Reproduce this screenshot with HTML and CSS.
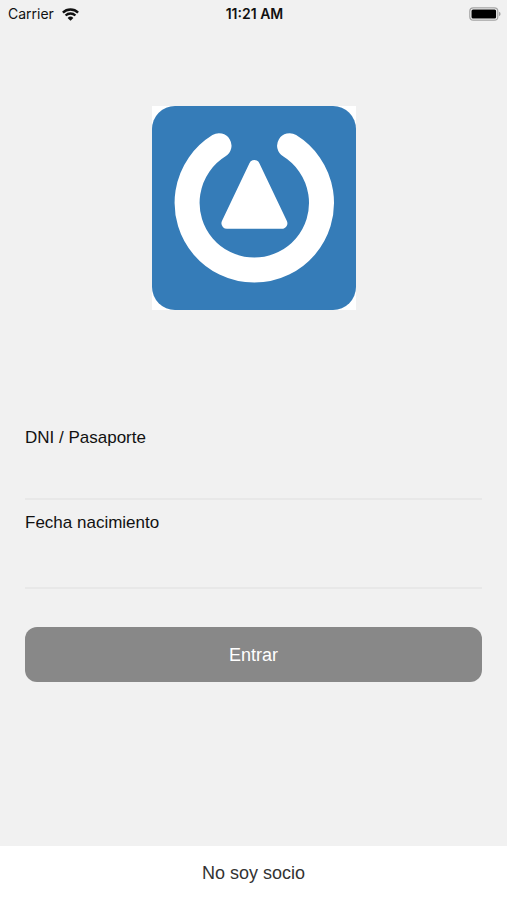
FILE: index.html
```html
<!DOCTYPE html>
<html lang="es">
<head>
<meta charset="utf-8">
<meta name="viewport" content="width=device-width, initial-scale=1">
<title>Entrar</title>
<link rel="stylesheet" href="styles.css">
</head>
<body>
<header class="status">
  <div class="status-left">
    <span>Carrier</span>
    <svg class="wifi" viewBox="0 0 17 13" aria-hidden="true">
      <path d="M.9 4.6a10.9 10.9 0 0 1 15.2 0M3.6 7.5a7 7 0 0 1 9.8 0" fill="none" stroke="#111" stroke-width="2.4"/>
      <path d="M8.5 12.8 5.6 9.9a4.1 4.1 0 0 1 5.8 0z" fill="#111"/>
    </svg>
  </div>
  <span class="time">11:21 AM</span>
  <div class="status-right">
    <svg class="battery" viewBox="0 0 32 14" aria-hidden="true">
      <rect x=".8" y=".8" width="28" height="12.4" rx="3.5" fill="#f8f8f8" stroke="#a3a3a3" stroke-width="1.2"/>
      <rect x="2.5" y="2.5" width="24.6" height="9" rx="1.5" fill="#000"/>
      <path d="M30 4.8q1.6.6 1.6 2.2t-1.6 2.2z" fill="#a3a3a3"/>
    </svg>
  </div>
</header>
<main class="content">
  <svg class="logo" viewBox="0 0 204 204" role="img" aria-label="Logo">
    <rect width="204" height="204" rx="23" fill="#357cb8"/>
    <path d="M67 39.7A67.2 67.2 0 1 0 137.6 39.7" fill="none" stroke="#fff" stroke-width="25" stroke-linecap="round"/>
    <path d="M102.4 59.5 129.9 117.3H74.9z" fill="#fff" stroke="#fff" stroke-width="11" stroke-linejoin="round"/>
  </svg>
  <form class="form">
    <div class="field">
      <label for="dni">DNI / Pasaporte</label>
      <input id="dni" type="text">
    </div>
    <div class="field">
      <label for="fecha">Fecha nacimiento</label>
      <input id="fecha" type="text">
    </div>
    <button class="submit" type="button">Entrar</button>
  </form>
</main>
<footer class="footer">
  <button class="guest" type="button">No soy socio</button>
</footer>
</body>
</html>
```

FILE: styles.css
```css
* {
  box-sizing: border-box;
}

body {
  margin: 0;
  min-height: 100vh;
  display: flex;
  flex-direction: column;
  background: #f1f1f1;
  color: #111;
  font-family: "Liberation Sans", Arial, sans-serif;
}

.status {
  display: grid;
  grid-template-columns: 1fr auto 1fr;
  align-items: center;
  height: 28px;
  padding: 0 6px 0 8px;
  font: 14px/20px Inter, sans-serif;
}

.status-left {
  display: flex;
  align-items: center;
  gap: 8px;
}

.wifi {
  width: 17px;
  height: 13px;
}

.time {
  font-weight: 600;
}

.status-right {
  display: flex;
  justify-content: flex-end;
}

.battery {
  width: 32px;
  height: 14px;
}

.content {
  flex: 1;
  display: flex;
  flex-direction: column;
  padding: 78px 25px 0;
}

.logo {
  width: 204px;
  height: 204px;
  align-self: center;
  background: #fff;
}

.form {
  display: flex;
  flex-direction: column;
  margin-top: 118px;
}

.field {
  display: flex;
  flex-direction: column;
  margin-bottom: 13px;
}

.field label {
  font-size: 17px;
  line-height: 20px;
}

.field input {
  height: 52px;
  padding: 0;
  border: 0;
  border-bottom: 2px solid #e8e8e8;
  border-radius: 0;
  background: transparent;
  color: inherit;
  font: inherit;
  font-size: 17px;
  outline: 0;
}

.field + .field input {
  height: 56px;
}

.submit {
  height: 55px;
  margin-top: 25px;
  border: 0;
  border-radius: 12px;
  background: #888;
  color: #fff;
  font: 18px/24px "Liberation Sans", Arial, sans-serif;
}

.footer {
  display: flex;
  height: 54px;
  background: #fff;
}

.guest {
  flex: 1;
  padding: 0;
  border: 0;
  background: transparent;
  color: #333;
  font: 18px/24px "Liberation Sans", Arial, sans-serif;
}
```
